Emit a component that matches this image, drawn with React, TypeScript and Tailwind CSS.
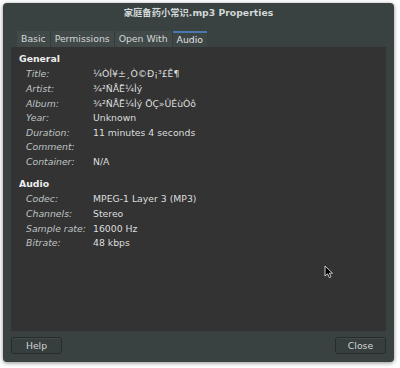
const general: [string, string][] = [
  ['Title:', '¼ÒÍ¥±¸Ò©Ð¡³£Ê¶'],
  ['Artist:', '¾²ÑÅË¼Ìý'],
  ['Album:', '¾²ÑÅË¼Ìý ÖÇ»ÛÉùÒô'],
  ['Year:', 'Unknown'],
  ['Duration:', '11 minutes 4 seconds'],
  ['Comment:', ''],
  ['Container:', 'N/A'],
]

const audio: [string, string][] = [
  ['Codec:', 'MPEG-1 Layer 3 (MP3)'],
  ['Channels:', 'Stereo'],
  ['Sample rate:', '16000 Hz'],
  ['Bitrate:', '48 kbps'],
]

function Row({ label, value }: { label: string; value: string }) {
  return (
    <div className="flex h-[14.6px] items-center pl-[7px]">
      <span className="w-[67px] italic text-[#bfc3c3]">{label}</span>
      <span className="text-[#dcdede]">{value}</span>
    </div>
  )
}

const tabs = ['Basic', 'Permissions', 'Open With', 'Audio']

export default function App() {
  return (
    <div
      className="relative h-[368px] w-[400px] bg-white pl-[3px] pt-[3px] text-[9.3px]"
      style={{ fontFamily: '"DejaVu Sans", "Noto Sans CJK SC", sans-serif' }}
    >
      <div className="flex h-[359px] w-[391px] flex-col rounded-[4px] bg-[#394241] shadow-[0_1px_4px_rgba(0,0,0,0.45)]">
        <div className="flex h-[18px] items-center justify-center pt-[1px] font-bold text-[#d2d7d7]">
          家庭备药小常识.mp3 Properties
        </div>
        <div className="flex h-[26px] items-end pl-[14px] pt-[10px]">
          {tabs.map((t) => (
            <div
              key={t}
              className={
                t === 'Audio'
                  ? 'flex h-[16px] items-center border-t-2 border-[#4a79b0] bg-[#3d4545] px-[4px] text-[#e2e4e4]'
                  : 'flex h-[16px] items-center border-r border-[#343b3b] bg-[#414949] px-[4px] text-[#d4d8d8]'
              }
            >
              {t}
            </div>
          ))}
        </div>
        <div className="mx-[8px] h-[284px] bg-[#333333] pt-[4px] pl-[8px]">
          <div className="flex h-[16px] items-center font-bold text-[#eeeeee]">General</div>
          {general.map(([l, v]) => (
            <Row key={l} label={l} value={v} />
          ))}
          <div className="mt-[7px] flex h-[16px] items-center font-bold text-[#eeeeee]">Audio</div>
          {audio.map(([l, v]) => (
            <Row key={l} label={l} value={v} />
          ))}
        </div>
        <div className="flex justify-between px-[8px] pt-[6px]">
          <button className="h-[17px] w-[51px] rounded-[3px] border border-[#262c2c] bg-[#363e3e] text-[#d2d6d6] shadow-[inset_0_1px_0_rgba(255,255,255,0.06)]">
            Help
          </button>
          <button className="h-[17px] w-[51px] rounded-[3px] border border-[#262c2c] bg-[#363e3e] text-[#d2d6d6] shadow-[inset_0_1px_0_rgba(255,255,255,0.06)]">
            Close
          </button>
        </div>
      </div>
      <svg className="absolute left-[324px] top-[265px]" width="10" height="14" viewBox="0 0 10 14">
        <path d="M1 1 L1 11 L3.5 8.8 L5.3 12.6 L7 11.8 L5.3 8.2 L8.5 8.2 Z" fill="#000" stroke="#ddd" strokeWidth="0.9" />
      </svg>
    </div>
  )
}
